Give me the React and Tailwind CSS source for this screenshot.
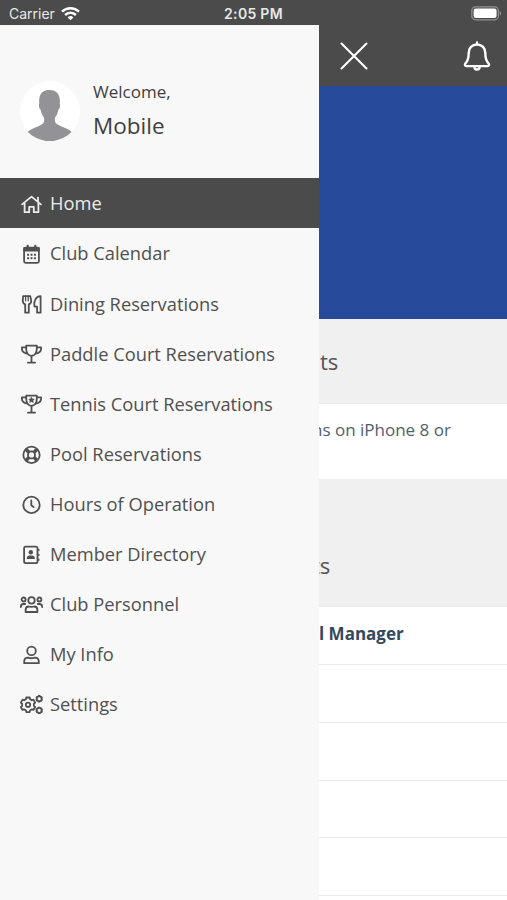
const gear = (cx, cy, outer, inner, teeth) => {
  const points = [];
  const step = (Math.PI * 2) / teeth;
  for (let i = 0; i < teeth; i++) {
    const a = i * step - Math.PI / 2;
    [[-0.32, inner], [-0.22, outer], [0.22, outer], [0.32, inner]].forEach(([offset, r]) => {
      const angle = a + offset * step;
      points.push(`${(cx + Math.cos(angle) * r).toFixed(2)} ${(cy + Math.sin(angle) * r).toFixed(2)}`);
    });
  }
  return `M${points.join('L')}Z`;
};

const Trophy = ({ children }) => (
  <>
    <path d="M8.2 4.6h10.6v3.2c0 4-2 7-5.3 7s-5.3-3-5.3-7z" />
    <path d="M8.2 6.3H3.9v1.5c0 2.6 2.2 4.3 5.4 4.8M18.8 6.3h4.3v1.5c0 2.6-2.2 4.3-5.4 4.8M13.5 14.8v6.4M9.9 21.6h7.2" />
    {children}
  </>
);

const icons = {
  home: <path d="M4.1 13.4l9.4-7.8 9.4 7.8M20 10.5V6.6M6.6 12v9.2h4.6v-5.3h4.6v5.3h4.6V12" />,
  calendar: (
    <>
      <rect x="6.1" y="6.6" width="14.8" height="15.2" rx="1.5" />
      <path d="M6.2 7h14.6v2.6H6.2z" fill="currentColor" />
      <path d="M9.7 4.8v2M17.3 4.8v2" strokeWidth="2.2" />
      <path d="M9.1 13.8h2M12.5 13.8h2M15.9 13.8h2M9.1 17.2h2M12.5 17.2h2M15.9 17.2h2" strokeLinecap="butt" strokeWidth="2" />
    </>
  ),
  dining: (
    <>
      <path d="M5.1 5.1h7.2l.9 4.6c.2 1.8-.8 3.1-2.4 3.7v8.3H7.2v-8.3c-1.6-.6-2.6-1.9-2.4-3.7z" />
      <path d="M7.6 5.2v4.6M10.2 5.2v4.6" strokeWidth="1.3" />
      <path d="M22.6 5.1v16.6h-3.5v-6.1h-2.6c-1-5 1-10.2 6.1-10.5z" />
    </>
  ),
  trophy: <Trophy />,
  trophyStar: (
    <Trophy>
      <path d="M13.5 6.3l.9 1.7 1.9.3-1.4 1.3.4 1.9-1.8-.9-1.8.9.4-1.9-1.4-1.3 1.9-.3z" fill="currentColor" strokeWidth=".6" />
    </Trophy>
  ),
  pool: (
    <>
      <circle cx="13.5" cy="12.9" r="8.2" />
      <circle cx="13.5" cy="12.9" r="3.5" />
      <path d="M8.2 7.6l2.7 2.7M18.8 7.6l-2.7 2.7M8.2 18.2l2.7-2.7M18.8 18.2l-2.7-2.7" strokeWidth="3.6" strokeLinecap="butt" />
    </>
  ),
  clock: (
    <>
      <circle cx="13.5" cy="12.9" r="8.2" />
      <path d="M13.3 8.4v4.8l2.4 1.9" />
    </>
  ),
  directory: (
    <>
      <rect x="6.1" y="4.7" width="13.4" height="16.4" rx="1.6" />
      <path d="M20.8 7.5v1M20.8 12.4v1M20.8 17.2v1" strokeWidth="1.4" />
      <circle cx="12.8" cy="10.3" r="2.2" fill="currentColor" stroke="none" />
      <path d="M8.8 17v-1c0-1.6 1.4-2.5 2.6-2.5h2.8c1.2 0 2.6.9 2.6 2.5v1z" fill="currentColor" stroke="none" />
    </>
  ),
  people: (
    <>
      <circle cx="13.5" cy="8.4" r="3.2" />
      <circle cx="5.6" cy="7.5" r="2" />
      <circle cx="21.4" cy="7.5" r="2" />
      <path d="M7.6 20v-2.1c0-2.2 1.4-3.4 3.2-3.4 1.8.6 3.6.6 5.4 0 1.8 0 3.2 1.2 3.2 3.4V20zM2.8 15c0-2 1-3 2.8-3h1.6M24.2 15c0-2-1-3-2.8-3h-1.6" />
    </>
  ),
  person: (
    <>
      <circle cx="13.5" cy="8.9" r="4.3" />
      <path d="M6.2 21.2v-1.6c0-2.6 1.6-4 3.8-4 2.2.8 4.8.8 7 0 2.2 0 3.8 1.4 3.8 4v1.6z" />
    </>
  ),
  settings: (
    <>
      <path d={gear(10, 12.8, 7.5, 6, 6)} />
      <circle cx="10" cy="12.8" r="2.2" />
      <path d={gear(21.2, 6.8, 2.9, 2.4, 6)} />
      <path d={gear(21.2, 18.4, 2.9, 2.4, 6)} />
    </>
  ),
};

const menuItems = [
  { label: 'Home', icon: 'home', active: true },
  { label: 'Club Calendar', icon: 'calendar' },
  { label: 'Dining Reservations', icon: 'dining' },
  { label: 'Paddle Court Reservations', icon: 'trophy' },
  { label: 'Tennis Court Reservations', icon: 'trophyStar' },
  { label: 'Pool Reservations', icon: 'pool' },
  { label: 'Hours of Operation', icon: 'clock' },
  { label: 'Member Directory', icon: 'directory' },
  { label: 'Club Personnel', icon: 'people' },
  { label: 'My Info', icon: 'person' },
  { label: 'Settings', icon: 'settings' },
];

function StatusBar() {
  return (
    <div className="flex h-[25px] shrink-0 items-center justify-between bg-[#4b4b4b] pt-[2px] pr-[5px] pl-[9px] font-['Inter',sans-serif] text-[#e8e8e8]">
      <div className="flex w-[120px] items-center gap-1.5">
        <span className="text-[14px]">Carrier</span>
        <svg className="h-3.5 w-[19px]" viewBox="0 0 19 14" fill="none" stroke="#fff" strokeWidth="2.5">
          <path d="M1 4.7a12.2 12.2 0 0 1 17 0M4.1 8a7.8 7.8 0 0 1 10.8 0" />
          <path d="M6.600 10.400a4.200 4.200 0 0 1 5.800 0L9.500 13.300z" fill="#fff" stroke="none" />
        </svg>
      </div>
      <span className="text-[14px] font-semibold tracking-[0.3px] whitespace-nowrap">2:05 PM</span>
      <div className="flex w-[124px] justify-end">
        <svg className="h-[15px] w-[31px]" viewBox="0 0 31 15">
          <rect x=".8" y=".8" width="26.6" height="13" rx="3.8" fill="none" stroke="#929292" strokeWidth="1.2" />
          <rect x="2.6" y="2.6" width="23" height="9.4" rx="2.2" fill="#fff" />
          <path d="M28.8 5v4.6c1.8-.8 1.8-3.8 0-4.6z" fill="#929292" />
        </svg>
      </div>
    </div>
  );
}

function Drawer() {
  return (
    <aside className="w-[319px] shrink-0 bg-[#f8f8f8]">
      <div className="flex h-[153px] gap-3 pt-[55px] pl-5 text-[#3f3f3f]">
        <svg className="size-[61px]" viewBox="0 0 61 61">
          <circle cx="30" cy="31" r="30" fill="#fff" />
          <path
            d="M7.8 52.1c3.5-4.2 11.2-5.2 15-8.3 1.6-1.5 1.8-4.5.9-6.8-1.8-1.8-2.5-4.5-3-7.3-1.6-1-2.2-4.5-1.4-6-.8-7 1.4-13.6 9.4-13.6 8.6-.4 12 5.6 11 13.6.8 1.5.2 5-1.4 6-.5 2.8-1.2 5.5-3 7.3-.9 2.3-.5 5.3 1.2 6.8 3.8 3.1 11.500 4.100 15 8.300-12.600 12.200-31 12.200-43.700 0z"
            fill="#929297"
          />
        </svg>
        <div className="whitespace-nowrap">
          <p className="text-[17px] leading-[23px]">Welcome,</p>
          <p className="mt-[7px] text-[22.5px] leading-[32px]">Mobile</p>
        </div>
      </div>
      <nav>
        {menuItems.map((item) => (
          <a
            key={item.label}
            className={`flex h-[50.1px] items-center gap-1 pl-[18px] text-[18.3px] whitespace-nowrap ${
              item.active ? 'bg-[#4b4b4b] text-[#ececec]' : 'text-[#505050]'
            }`}
          >
            <svg className="h-6 w-7 shrink-0" viewBox="0 0 28 24" fill="none" stroke="currentColor" strokeWidth="1.8" strokeLinecap="round" strokeLinejoin="round">
              {icons[item.icon]}
            </svg>
            <span>{item.label}</span>
          </a>
        ))}
      </nav>
    </aside>
  );
}

function Dashboard() {
  return (
    <main className="flex min-w-0 flex-1 flex-col overflow-hidden whitespace-nowrap">
      <header className="flex h-[61px] shrink-0 items-center justify-between bg-[#4b4b4b] pr-4 pl-5 text-white">
        <svg className="size-[30px]" viewBox="0 0 30 30" stroke="currentColor" strokeWidth="2.1" strokeLinecap="round">
          <path d="M2.5 2.5l25 25M27.5 2.5l-25 25" />
        </svg>
        <svg className="h-[30px] w-7" viewBox="0 0 28 30" fill="none" stroke="currentColor" strokeWidth="2.4" strokeLinecap="round" strokeLinejoin="round">
          <path d="M14 1.500v2M14 3.500c-5 0-8.300 3.600-8.300 8.500 0 5.300-.9 8-3.200 10.300-1.100 1.300-.6 2.800 1 2.800h21c1.600 0 2.100-1.500 1-2.800-2.300-2.300-3.200-5-3.200-10.300 0-4.900-3.300-8.500-8.300-8.500zM11.400 26c0 3.400 5.200 3.400 5.200 0" />
        </svg>
      </header>
      <div className="h-[233px] shrink-0 bg-[#284a9b]" />
      <div className="flex h-[85px] shrink-0 items-center border-b border-[#e8e8e8] bg-[#f0f0f0] pl-px text-[22px] text-[#555]">ts</div>
      <div className="h-[75px] shrink-0 bg-white pt-[13px] text-[17px] leading-[25px] text-[#4f5f70]">
        <p className="-ml-[7px]">ns on iPhone 8 or</p>
      </div>
      <div className="flex h-[128px] shrink-0 items-end border-b border-[#e8e8e8] bg-[#f0f0f0] pb-6 text-[22px] text-[#555]">
        <span className="-ml-[7px]">ts</span>
      </div>
      <div className="flex h-[58px] shrink-0 items-center border-b border-[#ebebeb] bg-white pb-1 text-[17px] font-bold text-[#34495e]">l Manager</div>
      {[1, 2, 3, 4].map((row) => (
        <div key={row} className="h-[57.8px] shrink-0 border-b border-[#ebebeb] bg-white" />
      ))}
    </main>
  );
}

export default function App() {
  return (
    <div className="flex h-[900px] w-[507px] flex-col overflow-hidden bg-white font-['Open_Sans',sans-serif]">
      <StatusBar />
      <div className="flex min-h-0 flex-1">
        <Drawer />
        <Dashboard />
      </div>
    </div>
  );
}
